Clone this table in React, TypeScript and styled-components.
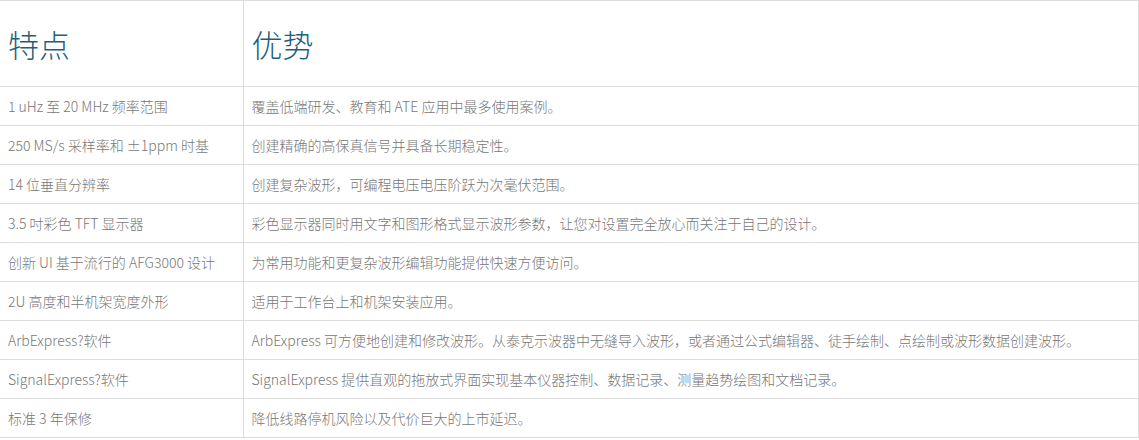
import React from 'react';
import styled, {createGlobalStyle} from 'styled-components';

const GlobalStyle = createGlobalStyle`
  html, body {
    margin: 0;
    padding: 0;
    background: #fff;
  }
`;

const rows: [string, string][] = [
    ['1 uHz 至 20 MHz 频率范围', '覆盖低端研发、教育和 ATE 应用中最多使用案例。'],
    ['250 MS/s 采样率和 ±1ppm 时基', '创建精确的高保真信号并具备长期稳定性。'],
    ['14 位垂直分辨率', '创建复杂波形，可编程电压电压阶跃为次毫伏范围。'],
    ['3.5 吋彩色 TFT 显示器', '彩色显示器同时用文字和图形格式显示波形参数，让您对设置完全放心而关注于自己的设计。'],
    ['创新 UI 基于流行的 AFG3000 设计', '为常用功能和更复杂波形编辑功能提供快速方便访问。'],
    ['2U 高度和半机架宽度外形', '适用于工作台上和机架安装应用。'],
    ['ArbExpress?软件', 'ArbExpress 可方便地创建和修改波形。从泰克示波器中无缝导入波形，或者通过公式编辑器、徒手绘制、点绘制或波形数据创建波形。'],
    ['SignalExpress?软件', 'SignalExpress 提供直观的拖放式界面实现基本仪器控制、数据记录、测量趋势绘图和文档记录。'],
    ['标准 3 年保修', '降低线路停机风险以及代价巨大的上市延迟。'],
];

const App: React.FC = () => {
    return (
        <>
            <GlobalStyle/>
            <Table>
                <colgroup>
                    <col style={{width: 243}}/>
                    <col/>
                </colgroup>
                <thead>
                <tr>
                    <HeadCell>特点</HeadCell>
                    <HeadCell>优势</HeadCell>
                </tr>
                </thead>
                <tbody>
                {rows.map(([feature, benefit], index) => (
                    <tr key={index}>
                        <Cell>{feature}</Cell>
                        <Cell>{benefit}</Cell>
                    </tr>
                ))}
                </tbody>
            </Table>
        </>
    );
};

const Table = styled.table`
  width: 1139px;
  table-layout: fixed;
  border-collapse: collapse;
  border-top: 1px solid #ddd;
  border-right: 1px solid #ddd;
  font-family: "Noto Sans CJK SC", "Liberation Sans", sans-serif;
`;

const HeadCell = styled.th`
  height: 86px;
  padding: 0 8px;
  box-sizing: border-box;
  text-align: left;
  vertical-align: middle;
  font-size: 31px;
  font-weight: 300;
  color: #1d5f7c;
  border-bottom: 1px solid #ddd;

  & + & {
    border-left: 1px solid #ddd;
  }
`;

const Cell = styled.td`
  height: 39px;
  padding: 0 8px;
  box-sizing: border-box;
  vertical-align: middle;
  font-size: 14px;
  font-weight: 300;
  color: #777;
  white-space: nowrap;
  border-bottom: 1px solid #ddd;

  & + & {
    border-left: 1px solid #ddd;
  }
`;

export default App;
